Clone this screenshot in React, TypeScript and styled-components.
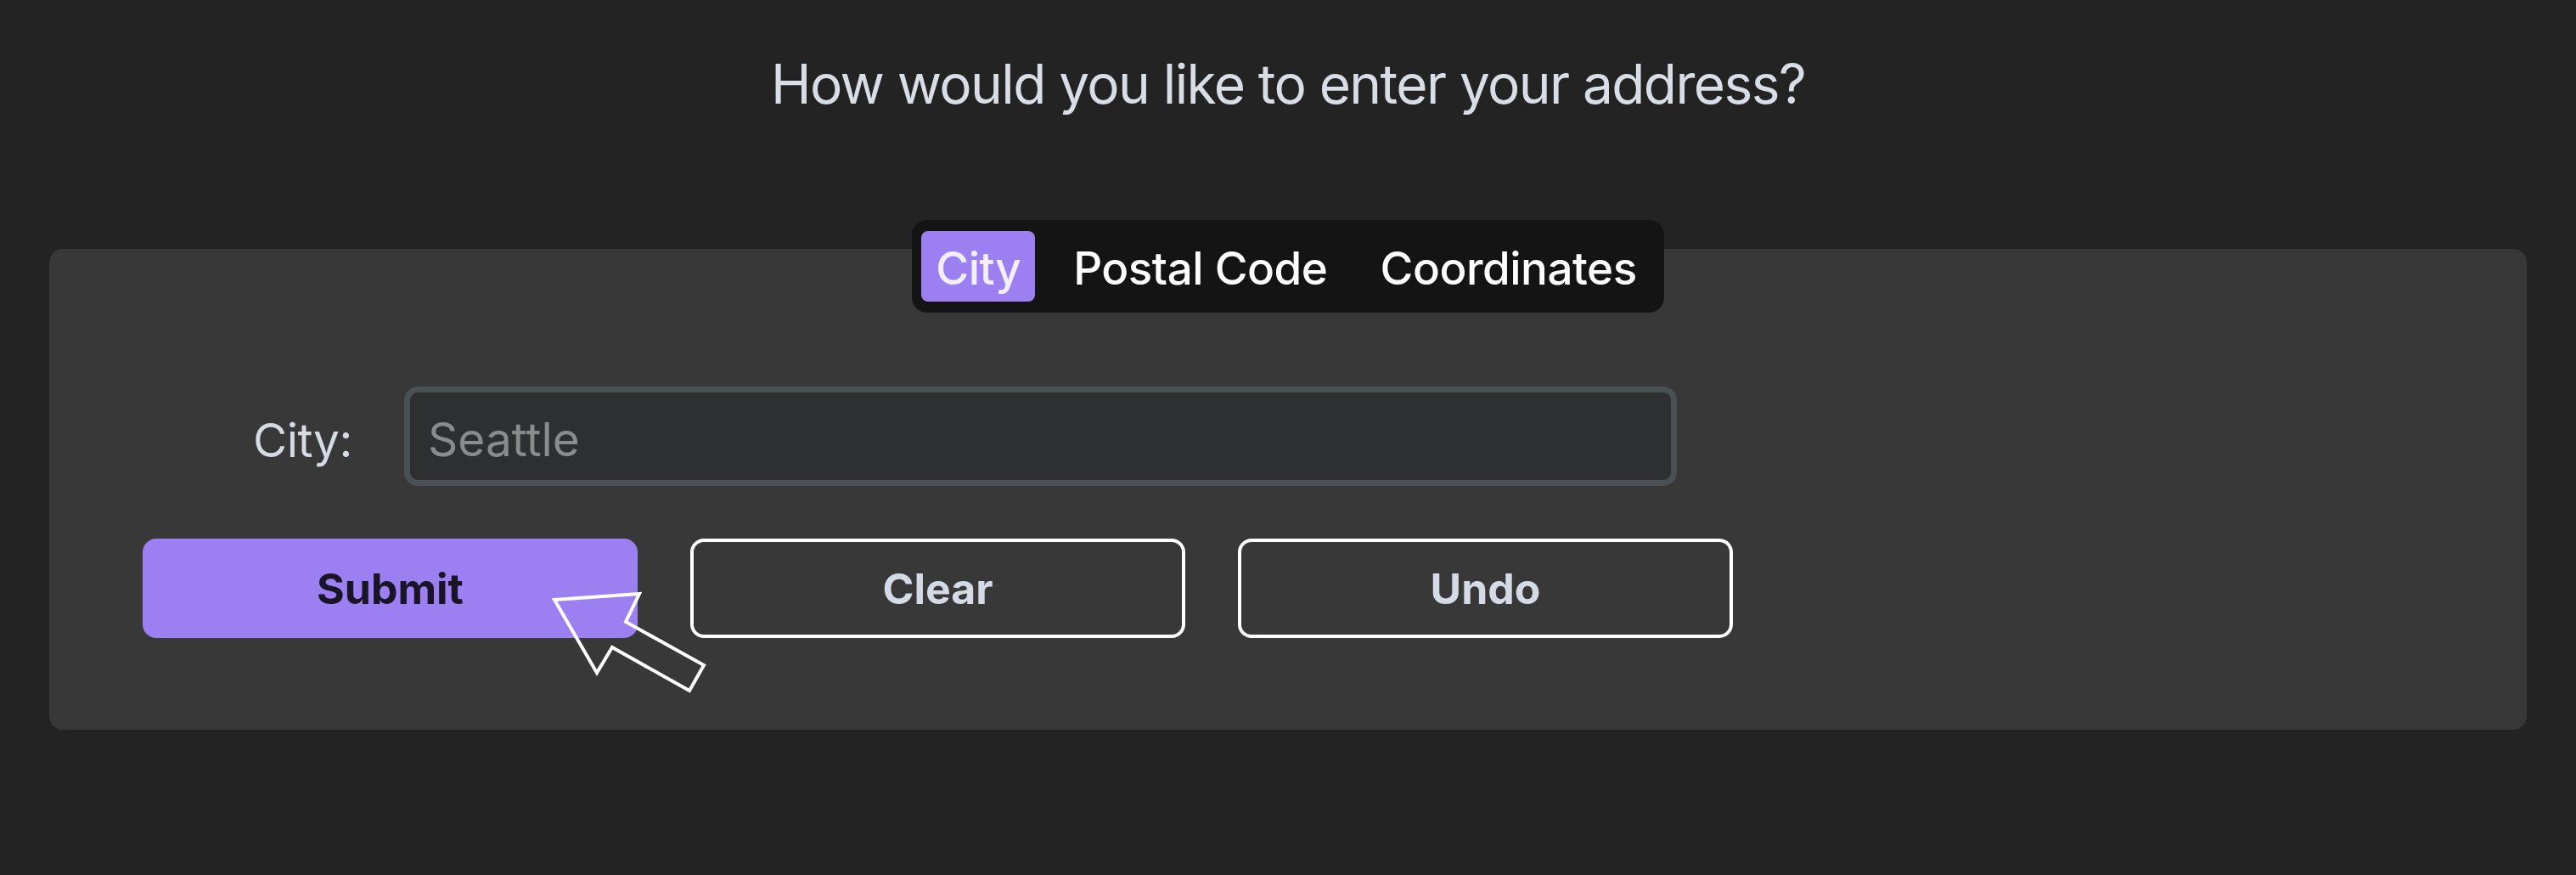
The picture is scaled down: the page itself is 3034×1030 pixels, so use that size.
import React, { useState } from "react";
import styled, { createGlobalStyle } from "styled-components";

const GlobalStyle = createGlobalStyle`
  html, body {
    margin: 0;
    padding: 0;
    background: #232323;
  }
  body {
    font-family: Inter, "Noto Sans", "Liberation Sans", sans-serif;
    -webkit-font-smoothing: antialiased;
  }
  * { box-sizing: border-box; }
`;

const Page = styled.div`
  width: 3034px;
  height: 1030px;
  background: #232323;
  padding: 67px 58px 0;
  display: flex;
  flex-direction: column;
  align-items: stretch;
`;

const Title = styled.h1`
  margin: 0;
  font-size: 64px;
  line-height: 64px;
  font-weight: 400;
  letter-spacing: -1.6px;
  color: #d9dde5;
  text-align: center;
`;

const Section = styled.section`
  margin-top: 128px;
  display: flex;
  flex-direction: column;
  align-items: center;
`;

const Segmented = styled.div`
  position: relative;
  z-index: 1;
  display: flex;
  align-items: center;
  gap: 28px;
  height: 109px;
  padding: 0 15px 0 11px;
  background: #141414;
  border-radius: 18px;
`;

const Segment = styled.button<{ $active?: boolean }>`
  height: 83px;
  padding: 6px 17px 0;
  border: none;
  border-radius: 8px;
  background: ${(p) => (p.$active ? "#9c80f2" : "transparent")};
  color: ${(p) => (p.$active ? "#f3efff" : "#ffffff")};
  font-family: inherit;
  font-size: 53px;
  font-weight: 500;
  letter-spacing: -0.5px;
  line-height: 1;
  cursor: pointer;
`;

const Card = styled.div`
  align-self: stretch;
  margin-top: -75px;
  background: #383838;
  border-radius: 16px;
  padding: 162px 110px 108px;
  display: flex;
  flex-direction: column;
  gap: 62px;
`;

const FieldRow = styled.div`
  display: flex;
  align-items: center;
  padding-left: 130px;
`;

const Label = styled.label`
  flex: 0 0 178px;
  font-size: 55px;
  letter-spacing: -0.5px;
  color: #d5dae3;
  padding-top: 8px;
`;

const TextInput = styled.input`
  width: 1499px;
  height: 117px;
  border: 7px solid #4a5155;
  border-radius: 16px;
  background: #2e2f31;
  padding: 6px 21px 0;
  font-family: inherit;
  font-size: 55px;
  color: #d5dae3;
  outline: none;
  &::placeholder {
    color: #8b8b8b;
  }
`;

const ButtonRow = styled.div`
  position: relative;
  display: flex;
  gap: 62px;
`;

const ActionButton = styled.button<{ $primary?: boolean }>`
  width: 583px;
  height: 117px;
  border-radius: 16px;
  border: ${(p) => (p.$primary ? "none" : "4px solid #ffffff")};
  background: ${(p) => (p.$primary ? "#9c80f2" : "transparent")};
  color: ${(p) => (p.$primary ? "#1a1526" : "#d5dbe6")};
  font-family: inherit;
  font-size: 50px;
  font-weight: 700;
  cursor: pointer;
`;

const Cursor = styled.svg`
  position: absolute;
  left: 480px;
  top: 60px;
  width: 190px;
  height: 130px;
  pointer-events: none;
  overflow: visible;
`;

export default function App() {
  const [mode, setMode] = useState("City");
  const modes = ["City", "Postal Code", "Coordinates"];
  return (
    <>
      <GlobalStyle />
      <Page>
        <Title>How would you like to enter your address?</Title>
        <Section>
          <Segmented>
            {modes.map((m) => (
              <Segment key={m} $active={m === mode} onClick={() => setMode(m)}>
                {m}
              </Segment>
            ))}
          </Segmented>
          <Card>
            <FieldRow>
              <Label htmlFor="city">City:</Label>
              <TextInput id="city" placeholder="Seattle" />
            </FieldRow>
            <ButtonRow>
              <ActionButton $primary>Submit</ActionButton>
              <ActionButton>Clear</ActionButton>
              <ActionButton>Undo</ActionButton>
              <Cursor viewBox="0 0 190 130">
                <polygon
                  points="5,12 105,5 89,38 181,89 164,119 73,68 55,98"
                  fill="none"
                  stroke="#ffffff"
                  strokeWidth="4"
                  strokeLinejoin="miter"
                />
              </Cursor>
            </ButtonRow>
          </Card>
        </Section>
      </Page>
    </>
  );
}
